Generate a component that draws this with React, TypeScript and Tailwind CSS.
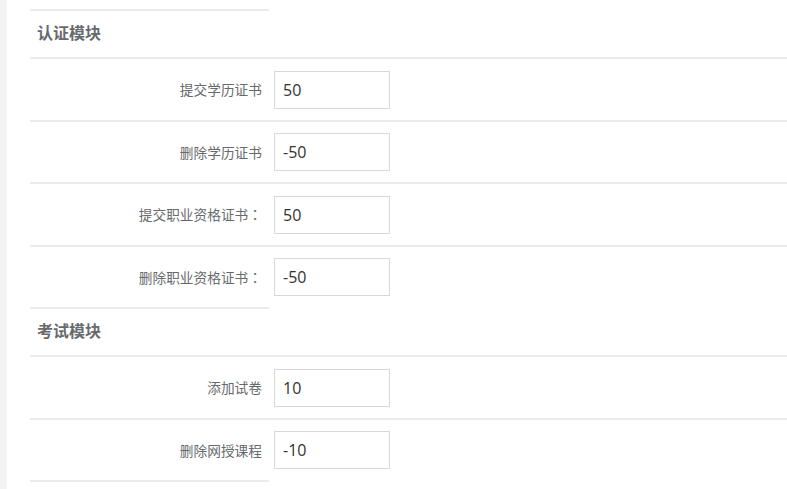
const FONT = "font-['Open_Sans','Noto_Sans_CJK_SC',sans-serif]";

interface Row {
  label: string;
  value: string;
  h: string;
}

interface Section {
  title: string;
  rows: Row[];
}

const sections: Section[] = [
  {
    title: "认证模块",
    rows: [
      { label: "提交学历证书", value: "50", h: "h-[61px]" },
      { label: "删除学历证书", value: "-50", h: "h-[60px]" },
      { label: "提交职业资格证书：", value: "50", h: "h-[61px]" },
      { label: "删除职业资格证书：", value: "-50", h: "h-[60px]" },
    ],
  },
  {
    title: "考试模块",
    rows: [
      { label: "添加试卷", value: "10", h: "h-[61px]" },
      { label: "删除网授课程", value: "-10", h: "h-[60px]" },
    ],
  },
];

// centred full-width colon, as the reference renders it
function Label({ text }: { text: string }) {
  if (!text.endsWith("：")) return <>{text}</>;
  return (
    <>
      {text.slice(0, -1)}
      <span className="font-['Noto_Sans_CJK_TC',sans-serif]">：</span>
    </>
  );
}

function FormRow({ row, last }: { row: Row; last: boolean }) {
  return (
    <>
      <div className={`flex items-center ${row.h}`}>
        <label className="w-[232px] text-right font-['Noto_Sans_CJK_SC',sans-serif] text-[13.7px] text-[#676a6c]">
          <Label text={row.label} />
        </label>
        <input
          defaultValue={row.value}
          className="ml-[12px] h-[38px] w-[116px] border border-[#d5d9dc] bg-white px-[8px] text-[16px] text-[#333] outline-none"
        />
      </div>
      <div
        className={`h-[2px] bg-[#e9ebec] ${last ? "w-[239px]" : "w-full"}`}
      />
    </>
  );
}

export default function App() {
  return (
    <div className={`flex min-h-screen bg-white ${FONT}`}>
      <div className="w-[7px] shrink-0 bg-[#f3f4f5]" />
      <div className="flex-1 pl-[23px] pt-[9px]">
        <div className="h-[2px] w-[239px] bg-[#e9ebec]" />
        {sections.map((s) => (
          <div key={s.title}>
            <div className="flex h-[46px] items-center pb-[3px] pl-[7px] text-[16px] font-bold text-[#676a6c]">
              {s.title}
            </div>
            <div className="h-[2px] w-full bg-[#e9ebec]" />
            {s.rows.map((r, i) => (
              <FormRow key={r.label} row={r} last={i === s.rows.length - 1} />
            ))}
          </div>
        ))}
      </div>
    </div>
  );
}
